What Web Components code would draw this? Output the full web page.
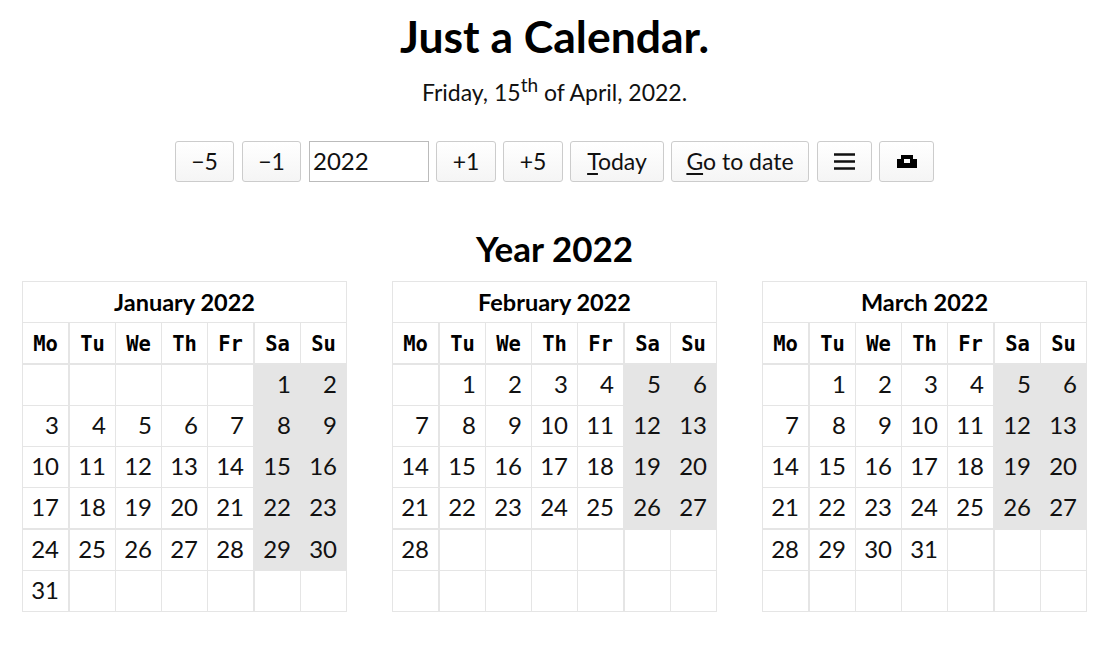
<!DOCTYPE html>
<html lang="en">
<head>
<meta charset="utf-8">
<title>Just a Calendar.</title>
<style>
    html, body { margin: 0; padding: 0; background: #fff; }
    body { font-family: "Lato", "Noto Sans", sans-serif; color: #000; }
</style>
</head>
<body>
<just-calendar></just-calendar>

<script>
// ── Toolbar button ────────────────────────────────────────────────────────────
class ToolButton extends HTMLElement {
    constructor() {
        super();
        this.attachShadow({ mode: 'open' });
        this.shadowRoot.innerHTML = `
            <style>
                :host {
                    display: flex;
                    box-sizing: border-box;
                    height: 41px;
                    padding-bottom: 2px;
                    align-items: center;
                    justify-content: center;
                    border: 1px solid #ccc;
                    border-radius: 3px;
                    background: linear-gradient(#fff, #f5f5f5);
                    font-size: 23px;
                    color: #111;
                    cursor: pointer;
                }
            </style>
            <slot></slot>
        `;
    }
}
customElements.define('tool-button', ToolButton);

// ── Toolbar ───────────────────────────────────────────────────────────────────
class CalToolbar extends HTMLElement {
    constructor() {
        super();
        this.attachShadow({ mode: 'open' });
        this.shadowRoot.innerHTML = `
            <style>
                :host {
                    display: flex;
                    justify-content: center;
                    gap: 7px;
                    margin-top: 30px;
                }
                .year {
                    box-sizing: border-box;
                    width: 120px;
                    height: 41px;
                    margin-left: 1px;
                    padding: 0 3px 2px;
                    border: 1px solid #bbb;
                    font: inherit;
                    font-size: 24px;
                    color: #111;
                    outline: none;
                }
                .gap { margin-left: 1px; }
                u { text-underline-offset: 3px; }
                svg { display: block; margin-top: 2px; }
            </style>
            <tool-button style="width:59px">−5</tool-button>
            <tool-button class="gap" style="width:59px">−1</tool-button>
            <input class="year" value="2022">
            <tool-button style="width:60px">+1</tool-button>
            <tool-button style="width:60px">+5</tool-button>
            <tool-button style="width:94px"><span><u>T</u>oday</span></tool-button>
            <tool-button style="width:138px"><span><u>G</u>o to date</span></tool-button>
            <tool-button class="gap" style="width:55px">
                <svg width="21" height="17" viewBox="0 0 21 17"><path d="M0 1.500h21M0 8.500h21M0 15.500h21" stroke="#111" stroke-width="2.400"/></svg>
            </tool-button>
            <tool-button style="width:55px">
                <svg width="20" height="13" viewBox="0 0 20 13"><path d="M4 0h12v4h4v9H0V4h4zM7 4v4h6V4z" fill="#000" fill-rule="evenodd"/></svg>
            </tool-button>
        `;
    }
}
customElements.define('cal-toolbar', CalToolbar);

// ── One month grid ────────────────────────────────────────────────────────────
class CalMonth extends HTMLElement {
    constructor() {
        super();
        this.attachShadow({ mode: 'open' });
    }

    connectedCallback() {
        const name = this.getAttribute('name');
        const offset = parseInt(this.getAttribute('offset'), 10);
        const days = parseInt(this.getAttribute('days'), 10);
        const heads = ['Mo', 'Tu', 'We', 'Th', 'Fr', 'Sa', 'Su'];

        let cells = heads.map(h => `<div class="cell head">${h}</div>`).join('');
        for (let i = 0; i < 42; i++) {
            const d = i - offset + 1;
            const has = d >= 1 && d <= days;
            cells += `<div class="cell day${has && i % 7 >= 5 ? ' we' : ''}">${has ? d : ''}</div>`;
        }

        this.shadowRoot.innerHTML = `
            <style>
                :host { display: block; width: 325px; }
                .grid {
                    display: grid;
                    grid-template-columns: 47px 46px 46px 46px 47px 46px 46px;
                    grid-template-rows: 41px 42px 41px 41px 41px 42px 41px 41px;
                    border-left: 1px solid #e5e5e5;
                    border-top: 1px solid #e5e5e5;
                    color: #111;
                }
                .cell, .title {
                    box-sizing: border-box;
                    display: flex;
                    align-items: center;
                    border-right: 1px solid #e5e5e5;
                    border-bottom: 1px solid #e5e5e5;
                }
                .title {
                    grid-column: 1 / -1;
                    justify-content: center;
                    font-size: 23.500px;
                    font-weight: 700;
                    color: #000;
                }
                .head {
                    justify-content: center;
                    padding-top: 2px;
                    font: 700 20.500px "DejaVu Sans Mono", monospace;
                    color: #000;
                    border-bottom-width: 2px;
                }
                .day {
                    justify-content: flex-end;
                    padding: 0 9px 3px 0;
                    font-size: 24px;
                }
                .cell:nth-child(7n+2), .cell:nth-child(7n+6) { border-right-width: 2px; }
                .cell:nth-child(n+30):nth-child(-n+36) { border-bottom-width: 2px; }
                .we { background: #e5e5e5; }
            </style>
            <div class="grid">
                <div class="title">${name}</div>
                ${cells}
            </div>
        `;
    }
}
customElements.define('cal-month', CalMonth);

// ── Page ──────────────────────────────────────────────────────────────────────
class JustCalendar extends HTMLElement {
    constructor() {
        super();
        this.attachShadow({ mode: 'open' });
        this.shadowRoot.innerHTML = `
            <style>
                :host { display: block; padding: 0 24px 40px 22px; text-align: center; }
                h1 { margin: 0; padding-top: 8px; font-size: 44.500px; line-height: 56px; font-weight: 700; }
                p { margin: 0; padding-top: 9px; font-size: 23px; line-height: 38px; color: #111; }
                sup { font-size: 19px; line-height: 0; }
                h2 { margin: 0; padding-top: 45px; font-size: 35px; line-height: 42px; font-weight: 700; }
                .months {
                    display: flex;
                    justify-content: space-between;
                    margin-top: 12px;
                }
            </style>
            <h1>Just a Calendar.</h1>
            <p>Friday, 15<sup>th</sup> of April, 2022.</p>
            <cal-toolbar></cal-toolbar>
            <h2>Year 2022</h2>
            <div class="months">
                <cal-month name="January 2022" offset="5" days="31"></cal-month>
                <cal-month name="February 2022" offset="1" days="28"></cal-month>
                <cal-month name="March 2022" offset="1" days="31"></cal-month>
            </div>
        `;
    }
}
customElements.define('just-calendar', JustCalendar);
</script>
</body>
</html>
